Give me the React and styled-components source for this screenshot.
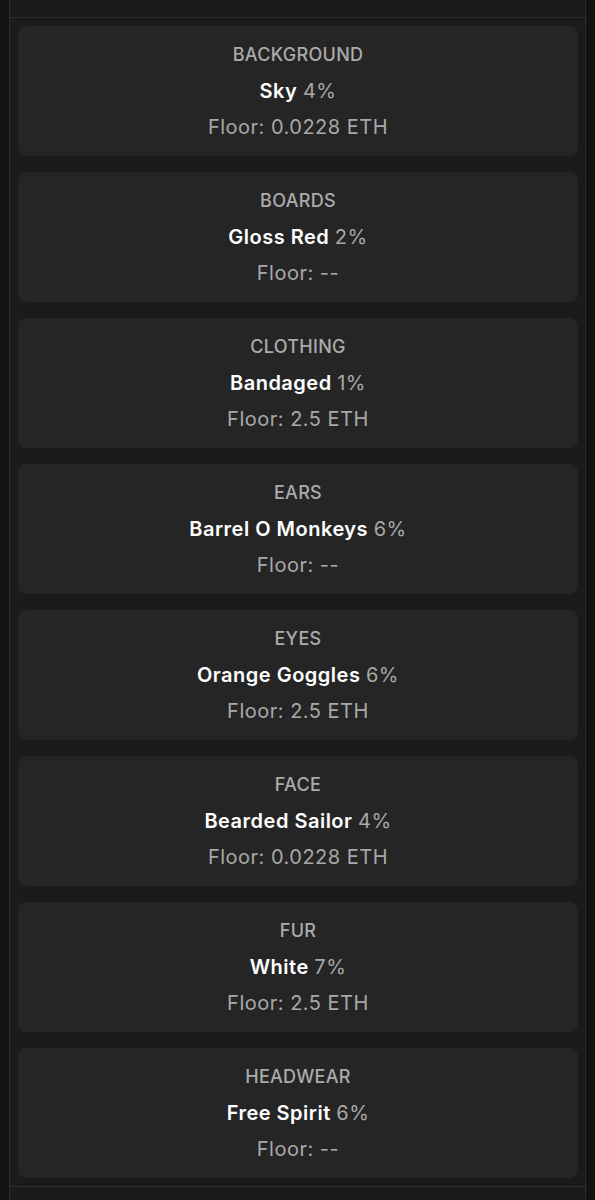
import styled, { createGlobalStyle } from "styled-components";

const GlobalStyle = createGlobalStyle`
  html, body {
    margin: 0;
    padding: 0;
    background: #121212;
  }
  body {
    font-family: Inter, "Noto Sans", sans-serif;
  }
`

const Page = styled.div`
  padding: 0 9px;
  min-height: 1200px;
`

const Panel = styled.div`
  background: #1b1b1b;
  border-left: 1px solid #2c2c2c;
  border-right: 1px solid #2c2c2c;
`

const TopBar = styled.div`
  height: 17px;
  border-bottom: 1px solid #2e2e2e;
`

const List = styled.div`
  display: flex;
  flex-direction: column;
  gap: 16px;
  padding: 8px 7px 8px 8px;
  border-bottom: 1px solid #2e2e2e;
`

const Card = styled.div`
  background: #252525;
  border-radius: 8px;
  height: 130px;
  display: flex;
  flex-direction: column;
  justify-content: center;
  align-items: center;
  text-align: center;
`

const TraitType = styled.div`
  color: #ababab;
  font-size: 18px;
  font-weight: 500;
  letter-spacing: 0.3px;
  line-height: 36px;
  text-transform: uppercase;
`

const TraitValue = styled.div`
  color: #ffffff;
  font-size: 20px;
  font-weight: 600;
  letter-spacing: 0.5px;
  line-height: 36px;

  span {
    color: #a8a8a8;
    font-weight: 400;
  }
`

const Floor = styled.div`
  color: #a8a8a8;
  font-size: 20px;
  letter-spacing: 0.5px;
  line-height: 36px;
`

const Footer = styled.div`
  height: 14px;
`

const traits = [
  { type: "Background", value: "Sky", pct: "4%", floor: "0.0228 ETH" },
  { type: "Boards", value: "Gloss Red", pct: "2%", floor: "--" },
  { type: "Clothing", value: "Bandaged", pct: "1%", floor: "2.5 ETH" },
  { type: "Ears", value: "Barrel O Monkeys", pct: "6%", floor: "--" },
  { type: "Eyes", value: "Orange Goggles", pct: "6%", floor: "2.5 ETH" },
  { type: "Face", value: "Bearded Sailor", pct: "4%", floor: "0.0228 ETH" },
  { type: "Fur", value: "White", pct: "7%", floor: "2.5 ETH" },
  { type: "Headwear", value: "Free Spirit", pct: "6%", floor: "--" },
]

const App = () => {
  return (
    <>
      <GlobalStyle />
      <Page>
        <Panel>
          <TopBar />
          <List>
            {traits.map((t) =>
              <Card key={t.type}>
                <TraitType>{t.type}</TraitType>
                <TraitValue>
                  {t.value} <span>{t.pct}</span>
                </TraitValue>
                <Floor>Floor: {t.floor}</Floor>
              </Card>
            )}
          </List>
          <Footer />
        </Panel>
      </Page>
    </>
  )
}

export default App
